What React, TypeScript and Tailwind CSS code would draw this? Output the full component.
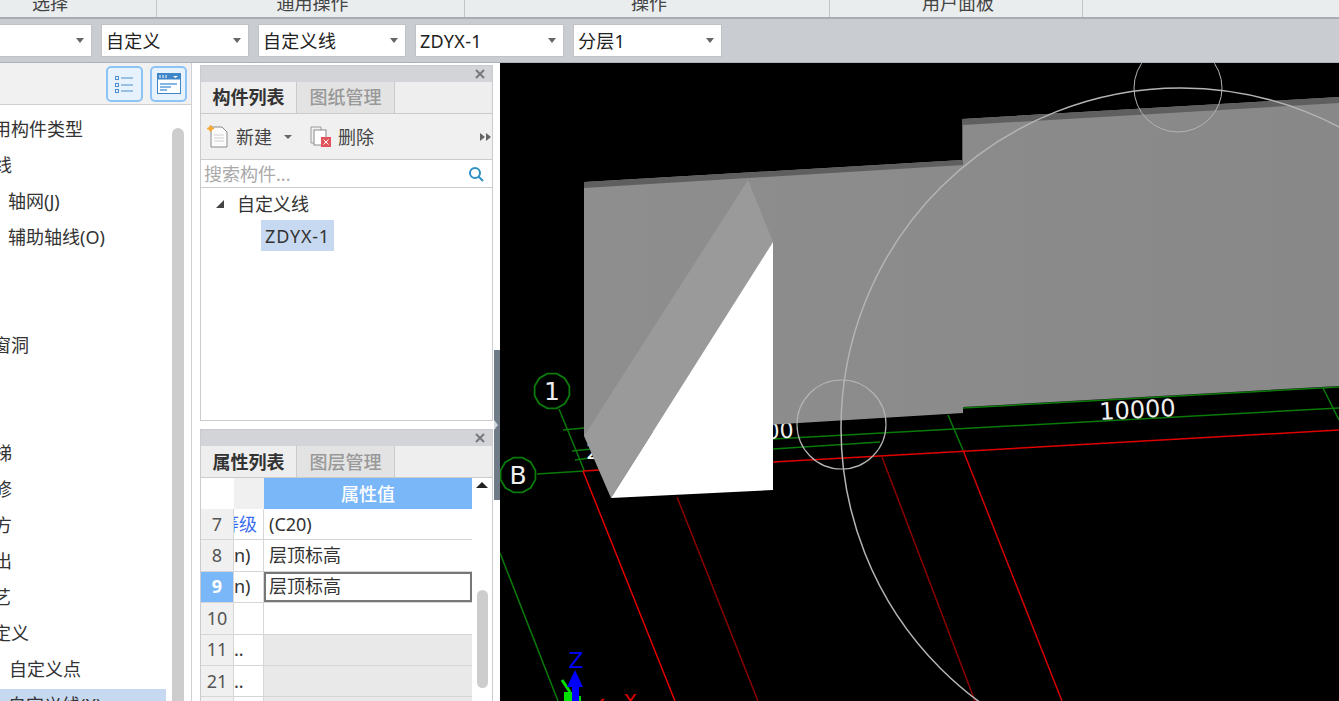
const treeRows = [
  { label: "常用构件类型", indent: "-ml-[25px]" },
  { label: "轴线", indent: "-ml-[24px]" },
  { label: "轴网(J)", indent: "ml-[8px]" },
  { label: "辅助轴线(O)", indent: "ml-[8px]" },
  { label: "", indent: "" },
  { label: "", indent: "" },
  { label: "门窗洞", indent: "-ml-[25px]" },
  { label: "", indent: "" },
  { label: "", indent: "" },
  { label: "楼梯", indent: "-ml-[24px]" },
  { label: "装修", indent: "-ml-[24px]" },
  { label: "土方", indent: "-ml-[24px]" },
  { label: "挑出", indent: "-ml-[24px]" },
  { label: "工艺", indent: "-ml-[25px]" },
  { label: "自定义", indent: "-ml-[25px]" },
  { label: "自定义点", indent: "ml-[9px]" },
];

const propRows = [
  { no: "7", name: "等级", value: "(C20)", blue: true },
  { no: "8", name: "n)", value: "层顶标高" },
  { no: "9", name: "n)", value: "层顶标高", active: true },
  { no: "10", name: "", value: "" },
  { no: "11", name: "..", value: "", gray: true },
  { no: "21", name: "..", value: "", gray: true },
  { no: "", name: "", value: "", gray: true },
];

const Select = ({ label, width }: { label: string; width: string }) => (
  <div className={`${width} h-[33px] bg-white border border-[#c0c2c5] flex items-center justify-between pl-[4px] pr-[7px] shrink-0`}>
    <span className="text-[18px] leading-[20px] text-[#222] tracking-[0.3px]">{label}</span>
    <span className="w-0 h-0 border-x-[4px] border-x-transparent border-t-[5px] border-t-[#666]" />
  </div>
);

const PanelTabs = ({ first, second, raised }: { first: string; second: string; raised?: boolean }) => (
  <div className="h-[32px] flex bg-[#eeeeee] border-b border-[#c9cbce] shrink-0">
    <div className={`w-[96px] flex items-center justify-center border-r border-[#c9cbce] text-[18px] leading-[20px] font-bold text-[#333] ${raised ? "pb-[2px]" : ""}`}>{first}</div>
    <div className={`w-[98px] flex items-center justify-center border-r border-[#c9cbce] bg-[#e3e3e3] text-[18px] leading-[20px] font-medium text-[#999] ${raised ? "pb-[2px]" : ""}`}>{second}</div>
  </div>
);

const PanelHead = () => (
  <div className="h-[16px] bg-[#d2d4d8] flex items-center justify-end pr-[7px] shrink-0">
    <svg width="10" height="10" viewBox="0 0 10 10">
      <path d="M1 1 L9 9 M9 1 L1 9" stroke="#77797c" strokeWidth="2" />
    </svg>
  </div>
);

const Canvas = () => {
  const gon = (cx: number, cy: number, r: number) =>
    Array.from({ length: 12 }, (_, i) => {
      const a = (i * Math.PI) / 6 + Math.PI / 12;
      return `${cx + r * Math.cos(a)},${cy + r * Math.sin(a)}`;
    }).join(" ");
  return (
    <svg viewBox="500 63 839 638" className="w-full h-full block">
      <defs>
        <linearGradient id="wall" x1="0" y1="0" x2="1" y2="0">
          <stop offset="0" stopColor="#8e8e8e" />
          <stop offset="1" stopColor="#888888" />
        </linearGradient>
      </defs>

      {/* grid under the model */}
      <g fill="none" strokeWidth="1.5">
        <path d="M500 553 L558 701" stroke="#0a7a0a" />
        <path d="M559 409 L584 470" stroke="#0a7a0a" />
        <path d="M537 474 L584 471" stroke="#0a7a0a" />
        <path d="M563 430 L584 428 M572 451 L592 449 M575 460 L597 457" stroke="#0a7a0a" />
        <path d="M773 439 L1339 408" stroke="#0a7a0a" />
        <path d="M773 449 L880 442" stroke="#0a7a0a" />
        <path d="M963 408 L1339 387" stroke="#0a7a0a" />
        <path d="M948 415 L963 450 M1323 388 L1339 420" stroke="#0a7a0a" />
        <path d="M583 471 L600 470" stroke="#e00000" />
        <path d="M773 462 L1339 430" stroke="#e00000" />
        <path d="M583 471 L675 701" stroke="#e00000" />
        <path d="M963 450 L1062 701" stroke="#d40000" />
        <path d="M677 497 L758 701" stroke="#8c0000" />
        <path d="M882 457 L975 701" stroke="#8c0000" />
      </g>

      <text x="586" y="459" fill="#f0f0f0" fontSize="22" fontFamily="'DejaVu Sans', sans-serif">2</text>
      <text x="766" y="439" fill="#f0f0f0" fontSize="22" fontFamily="'DejaVu Sans', sans-serif" transform="rotate(-3 766 439)">00</text>

      {/* wall */}
      <polygon points="584,182 962,160 962,119 1339,97 1339,386 963,407 963,413 584,436" fill="url(#wall)" />
      <polygon points="584,182 962,160 962,119 1339,97 1339,103 963,125 963,165 584,188" fill="#5f5f5f" />
      <polygon points="584,436 748,180 773,242 611,498" fill="#9a9a9a" />
      <polygon points="773,242 773,490 611,498" fill="#ffffff" />

      {/* circles */}
      <g fill="none" stroke="#b4b4b4">
        <circle cx="1181" cy="428" r="340" strokeWidth="1.5" />
        <circle cx="1178" cy="88" r="44" />
        <circle cx="841.5" cy="424.5" r="44.5" strokeWidth="1.2" />
      </g>

      {/* axis bubbles and labels */}
      <polygon points={gon(552, 391, 18)} fill="none" stroke="#0a7a0a" strokeWidth="1.8" />
      <polygon points={gon(518, 475, 18)} fill="none" stroke="#0a7a0a" strokeWidth="1.8" />
      <text x="552" y="400" textAnchor="middle" fill="#f0f0f0" fontSize="25" fontFamily="'DejaVu Sans', sans-serif">1</text>
      <text x="518" y="484" textAnchor="middle" fill="#f0f0f0" fontSize="25" fontFamily="'DejaVu Sans', sans-serif">B</text>
      <text x="1138" y="418" textAnchor="middle" fill="#f0f0f0" fontSize="24" fontFamily="'DejaVu Sans', sans-serif" transform="rotate(-3 1138 418)">10000</text>

      {/* axis gizmo */}
      <text x="576" y="668" textAnchor="middle" fill="#0000ff" fontSize="22" fontFamily="'DejaVu Sans', sans-serif">Z</text>
      <path d="M562 680 L570 692" stroke="#00e000" strokeWidth="3" />
      <rect x="564" y="692" width="8" height="9" fill="#00e000" />
      <rect x="577" y="696" width="4" height="5" fill="#00e000" />
      <polygon points="575,670 583,687 567,687" fill="#0000ff" />
      <rect x="572" y="686" width="7" height="15" fill="#0000ff" />
      <path d="M601 701 L604 699" stroke="#e00000" strokeWidth="2" />
      <text x="630" y="708" textAnchor="middle" fill="#e00000" fontSize="20" fontFamily="'DejaVu Sans', sans-serif">X</text>
    </svg>
  );
};

export default function App() {
  return (
    <div className="w-[1339px] h-[701px] overflow-hidden flex flex-col bg-white font-['Noto_Sans','Noto_Sans_CJK_SC',sans-serif]">
      {/* ribbon group labels */}
      <div className="h-[19px] bg-[#e9edee] border-b-2 border-[#a9adb1] flex shrink-0 overflow-hidden text-[#444] text-[18px] leading-[20px]">
        <div className="w-[157px] h-[17px] border-r border-[#c4c7c9] flex justify-center pr-[56px]"><span className="block -mt-[7px]">选择</span></div>
        <div className="w-[308px] h-[17px] border-r border-[#c4c7c9] flex justify-center pl-[4px]"><span className="block -mt-[7px]">通用操作</span></div>
        <div className="w-[365px] h-[17px] border-r border-[#c4c7c9] flex justify-center pl-[4px]"><span className="block -mt-[7px]">操作</span></div>
        <div className="w-[253px] h-[17px] border-r border-[#c4c7c9] flex justify-center pl-[4px]"><span className="block -mt-[7px]">用户面板</span></div>
      </div>

      {/* property selects */}
      <div className="h-[44px] bg-[#c9ccd1] border-b border-[#aeb1b5] flex items-center gap-[9px] -ml-[10px] shrink-0">
        <Select label="" width="w-[102px]" />
        <Select label="自定义" width="w-[148px]" />
        <Select label="自定义线" width="w-[148px]" />
        <Select label="ZDYX-1" width="w-[149px]" />
        <Select label="分层1" width="w-[149px]" />
      </div>

      <div className="flex-1 flex min-h-0">
        {/* component tree */}
        <div className="w-[192px] shrink-0 flex flex-col border-r border-[#cfd1d4]">
          <div className="h-[42px] bg-[#f1f1f1] border-b border-[#cfd1d4] flex items-center justify-end gap-[7px] pr-[4px] shrink-0">
            <div className="w-[37px] h-[36px] rounded-[5px] border-2 border-[#8dc3f5] bg-[#e8f2fc] flex items-center justify-center">
              <svg width="20" height="20" viewBox="0 0 20 20" fill="none" stroke="#4a8fd0">
                <rect x="0.5" y="2.5" width="3" height="3" />
                <rect x="0.5" y="9.5" width="3" height="3" />
                <rect x="0.5" y="15.5" width="3" height="3" />
                <path d="M6 4 H18 M6 11 H18 M6 17 H18" strokeWidth="1.2" />
              </svg>
            </div>
            <div className="w-[37px] h-[36px] rounded-[5px] border-2 border-[#8dc3f5] bg-[#e8f2fc] flex items-center justify-center">
              <svg width="24" height="22" viewBox="0 0 24 22">
                <rect x="0.5" y="0.5" width="23" height="20" fill="#ffffff" stroke="#3f86c8" />
                <rect x="0.5" y="0.5" width="23" height="6" fill="#3f86c8" />
                <path d="M3 2 V5 M6 2 V5 M9 2 V5" stroke="#fff" />
                <path d="M16 3 H21 L18.5 5 Z" fill="#fff" />
                <path d="M3 11 H20 M3 14 H14 M3 17 H10" stroke="#5aa0e0" strokeWidth="1.3" />
              </svg>
            </div>
          </div>
          <div className="flex-1 min-h-0 flex overflow-hidden">
            <div className="w-[172px] pt-[6px] overflow-hidden">
              {treeRows.map((row, i) => (
                <div key={i} className="h-[36px] flex items-center text-[18px] leading-[20px] text-[#333] whitespace-nowrap">
                  <span className={row.indent}>{row.label}</span>
                </div>
              ))}
              <div className="h-[14px] bg-[#c7d9f0] w-[166px] mt-[2px] text-[18px] leading-[32px] pl-[8px] text-[#333] overflow-hidden">自定义线(X)</div>
            </div>
            <div className="w-[12px] mt-[23px] bg-[#cdcdcd] rounded-[6px] h-[640px] shrink-0" />
          </div>
        </div>

        {/* middle dock */}
        <div className="w-[308px] shrink-0 bg-white flex">
          <div className="w-[293px] ml-[8px] flex flex-col pt-[2px] gap-[8px]">
            <div className="h-[356px] border border-[#c9cbce] flex flex-col shrink-0">
              <PanelHead />
              <PanelTabs first="构件列表" second="图纸管理" raised />
              <div className="h-[46px] bg-[#f0f0f0] border-b border-[#c9cbce] flex items-center pl-[6px] shrink-0 text-[#444] text-[18px] leading-[20px]">
                <svg width="22" height="24" viewBox="0 0 22 24">
                  <path d="M4 2 H15 L20 7 V22 H4 Z" fill="#fbfbfb" stroke="#8a8a8a" />
                  <path d="M7 10 H17 M7 13 H17 M7 16 H17" stroke="#cfcfcf" />
                  <path d="M3.5 0 L4.5 2.5 L7 3.5 L4.5 4.5 L3.5 7 L2.5 4.5 L0 3.5 L2.5 2.5 Z" fill="#f6a832" stroke="#f6a832" />
                </svg>
                <span className="ml-[7px]">新建</span>
                <span className="ml-[12px] w-0 h-0 border-x-[4px] border-x-transparent border-t-[4px] border-t-[#666]" />
                <svg className="ml-[18px]" width="22" height="24" viewBox="0 0 22 24">
                  <path d="M1 2 H11 V5 M1 2 V18 H5" fill="none" stroke="#9a9a9a" />
                  <rect x="4" y="5" width="12" height="15" fill="#fff" stroke="#8a8a8a" />
                  <rect x="11" y="12" width="10" height="10" fill="#e2535c" />
                  <path d="M13.5 14.5 L18.5 19.5 M18.5 14.5 L13.5 19.5" stroke="#fff" />
                </svg>
                <span className="ml-[6px]">删除</span>
                <span className="ml-auto mr-[1px] flex">
                  <span className="w-0 h-0 border-y-[4px] border-y-transparent border-l-[5px] border-l-[#666] mr-[1px]" />
                  <span className="w-0 h-0 border-y-[4px] border-y-transparent border-l-[5px] border-l-[#666]" />
                </span>
              </div>
              <div className="h-[28px] bg-white border-b border-[#c9cbce] flex items-center justify-between pl-[3px] pr-[8px] shrink-0">
                <span className="text-[18px] text-[#aaa] leading-[20px]">搜索构件...</span>
                <svg width="16" height="16" viewBox="0 0 16 16" fill="none" stroke="#2f8fc4" strokeWidth="2">
                  <circle cx="7" cy="7" r="5" />
                  <path d="M10.5 10.5 L15 15" />
                </svg>
              </div>
              <div className="flex-1 bg-white text-[18px] leading-[20px] text-[#333]">
                <div className="h-[32px] flex items-center pl-[15px]">
                  <span className="w-0 h-0 border-b-[8px] border-b-[#444] border-l-[8px] border-l-transparent" />
                  <span className="ml-[13px]">自定义线</span>
                </div>
                <div className="pl-[60px]">
                  <div className="w-[73px] h-[31px] bg-[#c7d9f0] flex items-center justify-center tracking-[0.8px]">ZDYX-1</div>
                </div>
              </div>
            </div>

            <div className="flex-1 min-h-0 border border-[#c9cbce] border-b-0 flex flex-col overflow-hidden">
              <PanelHead />
              <PanelTabs first="属性列表" second="图层管理" />
              <div className="flex flex-1 min-h-0 bg-white">
                <div className="w-[271px] shrink-0">
                  <div className="h-[31px] flex">
                    <div className="w-[33px]" />
                    <div className="w-[30px] bg-[#f0f0f0]" />
                    <div className="flex-1 bg-[#7ab7f8] text-white text-[18px] leading-[20px] font-medium flex items-center justify-center">属性值</div>
                  </div>
                  {propRows.map((row, i) => (
                    <div key={i} className="h-[31.4px] flex border-b border-[#d6d6d6]">
                      <div className={`w-[33px] flex items-center justify-center text-[18px] border-r border-[#d6d6d6] ${row.active ? "bg-[#7ab7f8] text-white font-bold" : "bg-[#f0f0f0] text-[#555]"}`}>{row.no}</div>
                      <div className={`w-[30px] overflow-hidden flex items-center border-r border-[#d6d6d6] text-[18px] whitespace-nowrap ${row.blue ? "text-[#3a6cf0]" : "text-[#333]"}`}>
                        <span className={row.blue ? "-ml-[13px]" : "ml-[0px]"}>{row.name}</span>
                      </div>
                      <div className={`flex-1 flex items-center pl-[5px] text-[18px] text-[#333] ${row.gray ? "bg-[#e9e9e9]" : ""} ${row.active ? "border-2 border-[#777] !pl-[3px]" : ""}`}>{row.value}</div>
                    </div>
                  ))}
                </div>
                <div className="w-[21px] flex flex-col items-center">
                  <span className="mt-[4px] w-0 h-0 border-x-[6px] border-x-transparent border-b-[6px] border-b-[#222]" />
                  <div className="w-[11px] h-[98px] mt-[102px] bg-[#cdcdcd] rounded-[6px]" />
                </div>
              </div>
            </div>
          </div>
          <div className="w-[6px] ml-[1px] relative">
            <div className="absolute left-0 top-[287px] w-[6px] h-[150px] bg-[#6f7c88]" />
            <div className="absolute left-0 top-[357px] w-0 h-0 border-y-[5px] border-y-transparent border-l-[4px] border-l-[#d5d8db]" />
          </div>
        </div>

        {/* 3d view */}
        <div className="flex-1 min-w-0 bg-black">
          <Canvas />
        </div>
      </div>
    </div>
  );
}
